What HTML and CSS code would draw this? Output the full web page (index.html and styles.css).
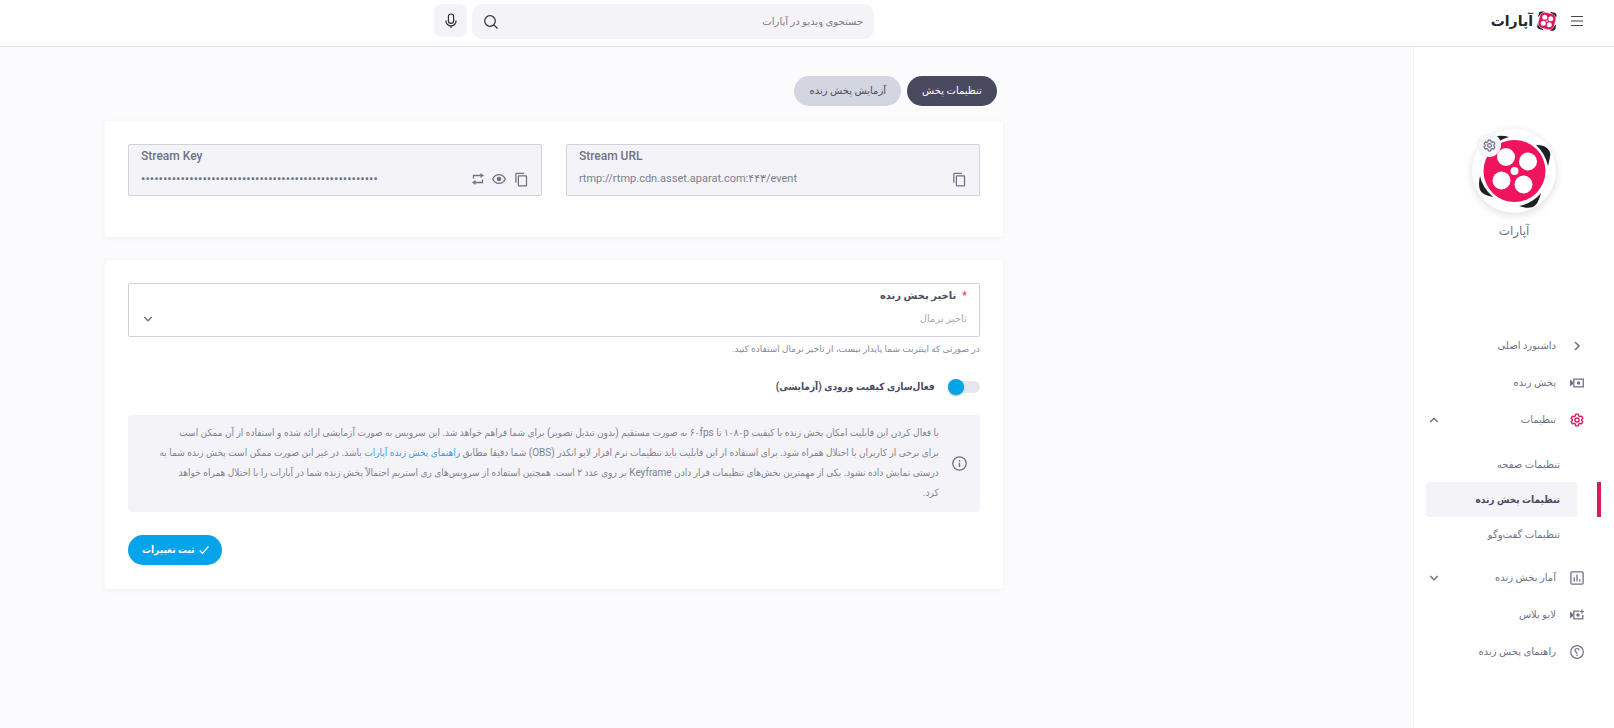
FILE: index.html
```html
<!DOCTYPE html>
<html lang="fa" dir="rtl">
<head>
<meta charset="utf-8">
<meta name="viewport" content="width=device-width, initial-scale=1">
<title>آپارات - تنظیمات پخش زنده</title>
<link rel="stylesheet" href="styles.css">
</head>
<body>
<svg class="sprite" aria-hidden="true">
  <symbol id="i-gear" viewBox="0 0 24 24"><g fill="none" stroke="currentColor" stroke-linejoin="round"><path d="M9.800 2h4.400l.7 3.100 2 1.200 3-1 2.200 3.800-2.300 2.100v1.600l2.300 2.100-2.200 3.800-3-1-2 1.200-.7 3.100H9.800l-.7-3.100-2-1.200-3 1-2.200-3.800 2.300-2.100v-1.600L1.900 9.100l2.200-3.800 3 1 2-1.200z"/><circle cx="12" cy="12" r="3.500"/></g></symbol>
  <symbol id="i-copy" viewBox="0 0 24 24"><path fill="currentColor" d="M16 1H4a2 2 0 0 0-2 2v14h2V3h12zm3 4H8a2 2 0 0 0-2 2v14a2 2 0 0 0 2 2h11a2 2 0 0 0 2-2V7a2 2 0 0 0-2-2zm0 16H8V7h11z"/></symbol>
  <symbol id="i-down" viewBox="0 0 12 12"><path fill="none" stroke="currentColor" stroke-width="1.700" d="M1.500 3.500 6 8l4.500-4.500"/></symbol>
  <symbol id="i-reel" viewBox="0 0 80 80"><g fill="#1f1f24"><path d="M35 6q-6-2-12-1-5 1-7 6l-2 9Q23 9 35 6z"/><path d="M62 14q9 0 12 4 3 3 2 8l-2 9Q71 22 62 14z"/><path d="M6 45q-2 9 0 14 2 5 13 7Q8 56 6 45z"/><path d="M45 75q8 3 14 1 5-2 8-14-8 10-22 13z"/></g><circle cx="40.500" cy="40" r="31" fill="#f0145f"/><g fill="#fff"><circle cx="32" cy="26" r="9"/><circle cx="54" cy="30.500" r="9"/><circle cx="27.500" cy="49.500" r="9"/><circle cx="49.500" cy="53.500" r="9"/><circle cx="40.500" cy="40" r="4"/></g></symbol>
</svg>

<header class="topbar">
  <div class="brand">
    <button class="icon-btn" type="button" aria-label="منو"><svg width="12" height="12" viewBox="0 0 12 12"><path d="M0 1.500h12M0 6h12M0 10.500h12" stroke="#45454d" stroke-width="1.200"/></svg></button>
    <a class="logo" href="#" aria-label="آپارات">
      <svg width="20" height="20" viewBox="0 0 80 80"><g fill="#1f1f24"><path d="M32 2H16Q10 2 8 8L4 24z"/><path d="m52 3 18 4c6 2 9 7 8 13l-5 15z"/><path d="M4 46 1 60c-1 6 3 11 9 12l16 5z"/><path d="m50 78 12 1c7-1 10-4 12-10l3-15z"/></g><rect x="7" y="7" width="66" height="66" rx="22" transform="rotate(14 40 40)" fill="#df1557" stroke="#fff" stroke-width="2"/><g fill="#fff"><circle cx="31" cy="25" r="10"/><circle cx="55" cy="31" r="10"/><circle cx="25" cy="49" r="10"/><circle cx="49" cy="55" r="10"/><circle cx="40" cy="40" r="3.500"/></g></svg>
      <span>آپارات</span>
    </a>
  </div>
  <form class="search" role="search">
    <div class="search-box">
      <input type="search" aria-label="جستجو" placeholder="جستجوی ویدیو در آپارات">
      <button class="icon-btn" type="submit" aria-label="جستجو"><svg width="14" height="14" viewBox="0 0 14 14" fill="none" stroke="#2d2d33" stroke-width="1.200"><circle cx="6" cy="6" r="5.300"/><path d="m9.800 9.800 3.700 3.700"/></svg></button>
    </div>
    <button class="mic" type="button" aria-label="جستجوی صوتی"><svg width="12" height="16" viewBox="0 0 12 16" fill="none" stroke="#2d2d33" stroke-width="1.200"><rect x="3.400" y="1" width="5.200" height="9.400" rx="2.600"/><path d="M1 7.500v.7a5 4.600 0 0 0 10 0v-.7M6 12.800V15"/></svg></button>
  </form>
</header>

<div class="shell">
  <aside class="sidebar">
    <div class="profile">
      <div class="avatar">
        <svg width="80" height="80"><use href="#i-reel"/></svg>
        <button class="avatar-edit" type="button" aria-label="ویرایش"><svg width="13" height="13" stroke-width="2.200"><use href="#i-gear"/></svg></button>
      </div>
      <strong class="profile-name">آپارات</strong>
    </div>
    <nav class="menu">
      <a class="item" href="#"><svg class="ico" viewBox="0 0 14 14"><path d="m5 3 4 4-4 4" fill="none" stroke="currentColor" stroke-width="1.600"/></svg>داشبورد اصلی</a>
      <a class="item" href="#"><svg class="ico" viewBox="0 0 14 14"><path d="M3.800 3.200h9.500v7.600H3.800z" fill="none" stroke="currentColor" stroke-width="1.300"/><path d="M0 3.500 3 6v2L0 10.500z" fill="currentColor"/><circle cx="8.500" cy="7" r="1.700" fill="currentColor"/></svg>پخش زنده</a>
      <button class="item" type="button" aria-expanded="true"><svg class="ico ico-pink" stroke-width="2.400"><use href="#i-gear"/></svg>تنظیمات<svg class="caret caret-up"><use href="#i-down"/></svg></button>
      <div class="submenu">
        <a href="#">تنظیمات صفحه</a>
        <a class="active" href="#" aria-current="page">تنظیمات پخش زنده</a>
        <a href="#">تنظیمات گفت‌وگو</a>
      </div>
      <button class="item" type="button" aria-expanded="false"><svg class="ico" viewBox="0 0 14 14" fill="none" stroke="currentColor" stroke-width="1.300"><rect x=".9" y=".9" width="12.200" height="12.200" rx="1"/><path d="M4.200 10.500V6.200M7 10.500v-7M9.800 10.500V8.200"/></svg>آمار پخش زنده<svg class="caret"><use href="#i-down"/></svg></button>
      <a class="item" href="#"><svg class="ico" viewBox="0 0 14 14"><path d="M9.500 3.200H3.800v7.600h9V7" fill="none" stroke="currentColor" stroke-width="1.300"/><path d="M0 3.500 3 6v2L0 10.500z" fill="currentColor"/><circle cx="8" cy="7" r="1.700" fill="currentColor"/><path d="M12 1.500v4M10 3.500h4" stroke="currentColor" stroke-width="1.200"/></svg>لایو پلاس</a>
      <a class="item" href="#"><svg class="ico" viewBox="0 0 14 14" fill="none" stroke="currentColor"><circle cx="7" cy="7" r="6.300" stroke-width="1.200"/><path d="M9 5.500C9 4.200 8.200 3.500 7 3.500S5 4.300 5 5.400c0 1.500 2 1.600 2 3.300M7 9.600v1.300" stroke-width="1.200"/></svg>راهنمای پخش زنده</a>
    </nav>
  </aside>

  <main class="content">
    <div class="column">
      <nav class="tabs">
        <a class="tab tab-on" href="#">تنظیمات پخش</a>
        <a class="tab" href="#">آزمایش پخش زنده</a>
      </nav>

      <section class="card stream">
        <div class="field locked" dir="ltr">
          <label for="surl">Stream URL</label>
          <div class="row">
            <input id="surl" type="text" readonly value="rtmp://rtmp.cdn.asset.aparat.com:۴۴۳/event">
            <button class="icon-btn" type="button" aria-label="کپی"><svg width="15" height="15"><use href="#i-copy"/></svg></button>
          </div>
        </div>
        <div class="field locked" dir="ltr">
          <label for="skey">Stream Key</label>
          <div class="row">
            <input id="skey" type="password" readonly value="000000000000000000000000000000000000000000000000000000">
            <button class="icon-btn" type="button" aria-label="تغییر کلید"><svg width="12" height="12" viewBox="0 0 12 12"><path d="M1.500 5.500v-3H9M10.500 6.500v3H3" fill="none" stroke="currentColor" stroke-width="1.300"/><path d="M8.500 0 12 2.500 8.500 5zM3.500 7 0 9.500 3.500 12z" fill="currentColor"/></svg></button>
            <button class="icon-btn" type="button" aria-label="نمایش"><svg width="14" height="14" viewBox="0 0 14 14"><path d="M.7 7C2 4.200 4.300 2.700 7 2.700S12 4.200 13.300 7C12 9.800 9.700 11.300 7 11.300S2 9.800.7 7z" fill="none" stroke="currentColor" stroke-width="1.300"/><circle cx="7" cy="7" r="2.300" fill="currentColor"/></svg></button>
            <button class="icon-btn" type="button" aria-label="کپی"><svg width="15" height="15"><use href="#i-copy"/></svg></button>
          </div>
        </div>
      </section>

      <form class="card delay">
        <div class="field">
          <label for="latency"><span class="req">*</span>تاخیر پخش زنده</label>
          <div class="row select">
            <select id="latency"><option>تاخیر نرمال</option></select>
            <svg class="select-caret"><use href="#i-down"/></svg>
          </div>
        </div>
        <p class="hint">در صورتی که اینترنت شما پایدار نیست، از تاخیر نرمال استفاده کنید.</p>
        <label class="toggle"><input type="checkbox" role="switch" checked><span>فعال‌سازی کیفیت ورودی (آزمایشی)</span></label>
        <div class="notice">
          <svg width="15" height="15" viewBox="0 0 15 15" fill="none" stroke="currentColor"><circle cx="7.500" cy="7.500" r="6.700" stroke-width="1.300"/><path d="M7.500 6.700V11M7.500 4v1.400" stroke-width="1.400"/></svg>
          <p>با فعال کردن این قابلیت امکان پخش زنده با کیفیت ۱۰۸۰p تا ۶۰fps به صورت مستقیم (بدون تبدیل تصویر) برای شما فراهم خواهد شد. این سرویس به صورت آزمایشی ارائه شده و استفاده از آن ممکن است<br>برای برخی از کاربران با اختلال همراه شود. برای استفاده از این قابلیت باید تنظیمات نرم افزار لایو انکدر (OBS) شما دقیقا مطابق <a href="#">راهنمای پخش زنده آپارات</a> باشد. در غیر این صورت ممکن است پخش زنده شما به<br>درستی نمایش داده نشود. یکی از مهمترین بخش‌های تنظیمات قرار دادن Keyframe بر روی عدد ۲ است. همچنین استفاده از سرویس‌های ری استریم احتمالاً پخش زنده شما در آپارات را با اختلال همراه خواهد<br>کرد.</p>
        </div>
        <button class="save" type="submit"><svg width="10" height="10" viewBox="0 0 10 10"><path d="m.7 5.500 2.800 2.800 6-6.800" fill="none" stroke="#fff" stroke-width="1.200"/></svg>ثبت تغییرات</button>
      </form>
    </div>
  </main>
</div>
</body>
</html>
```

FILE: styles.css
```css
:root {
  --text: #6f7285;
  --dark: #4a4b5f;
  --soft: #f3f3f8;
  --line: #d0d1d9;
  --pink: #d81b5b;
  --blue: #04a3ea;
  --narrow: Roboto, "DejaVu Sans Condensed", "DejaVu Sans", sans-serif;
}

* { box-sizing: border-box; }

body {
  margin: 0;
  min-height: 100vh;
  display: flex;
  flex-direction: column;
  background: #fbfbfd;
  color: var(--text);
  font: 10px/20px Roboto, "DejaVu Sans", sans-serif;
}

a { color: inherit; text-decoration: none; }
button, input, select { font: inherit; color: inherit; }
button { border: 0; background: none; padding: 0; cursor: pointer; }
svg { flex: none; display: block; }
.sprite { position: absolute; width: 0; height: 0; }
.icon-btn { display: grid; place-items: center; }

.topbar {
  display: grid;
  grid-template-columns: 7fr minmax(0, 440px) 4fr;
  align-items: start;
  height: 47px;
  padding: 4px 31px 4px 29px;
  background: #fff;
  border-bottom: 1px solid #e4e4ec;
}
.brand { display: flex; align-items: center; gap: 14px; height: 34px; }
.logo {
  display: flex;
  align-items: center;
  gap: 4px;
  color: #25252b;
  font-size: 14px;
  font-weight: 700;
}
.search { display: flex; gap: 5px; }
.search-box {
  flex: 1;
  display: flex;
  align-items: center;
  height: 35px;
  padding: 0 11px 0 12px;
  border-radius: 10px;
  background: var(--soft);
}
.search-box input {
  flex: 1;
  min-width: 0;
  border: 0;
  padding: 0;
  outline: 0;
  background: none;
}
.search-box input::placeholder { color: #7b7c88; }
.mic {
  display: grid;
  place-items: center;
  width: 33px;
  height: 33px;
  border-radius: 8px;
  background: var(--soft);
}

.shell { flex: 1; display: flex; }

.sidebar {
  width: 201px;
  padding-top: 82px;
  background: #fff;
  border-left: 1px solid #f3f3f7;
}
.profile { display: flex; flex-direction: column; align-items: center; gap: 8px; }
.avatar {
  position: relative;
  display: grid;
  place-items: center;
  width: 84px;
  height: 84px;
  border-radius: 50%;
  background: #fff;
  box-shadow: 0 2px 8px rgba(0, 0, 0, .14);
}
.avatar-edit {
  position: absolute;
  top: 4px;
  left: 5px;
  display: grid;
  place-items: center;
  width: 24px;
  height: 24px;
  border-radius: 50%;
  background: var(--soft);
}
.profile-name { font-size: 12px; font-weight: 400; }

.menu { padding-top: 86px; }
.item {
  display: flex;
  align-items: center;
  gap: 14px;
  width: 100%;
  height: 37px;
  padding: 0 30px 0 15px;
  text-align: start;
}
.ico { width: 14px; height: 14px; }
.ico-pink { color: var(--pink); }
.caret { width: 10px; height: 10px; margin-inline-start: auto; }
.caret-up { transform: rotate(180deg); }
.submenu { padding: 9px 0 7px; }
.submenu a {
  display: block;
  margin: 0 37px 0 12px;
  padding: 0 17px;
  line-height: 35px;
}
.submenu .active {
  position: relative;
  border-radius: 4px;
  background: var(--soft);
  color: var(--dark);
  font-family: var(--narrow);
  font-weight: 700;
}
.submenu .active::before {
  content: "";
  position: absolute;
  top: 0;
  right: -24px;
  width: 4px;
  height: 100%;
  background: var(--pink);
}

.content {
  flex: 1;
  min-width: 0;
  display: grid;
  grid-template-columns: 1fr 3fr;
  gap: 6px;
  padding: 29px 105px;
}
.column { grid-column: 2; min-width: 0; }
.tabs { display: flex; gap: 6px; padding: 0 6px; margin-bottom: 15px; }
.tab {
  padding: 0 15px;
  border-radius: 15px;
  line-height: 30px;
  background: #d3d5e0;
  color: var(--dark);
}
.tab-on { background: #49495f; color: #fff; }

.card {
  padding: 23px 23px 24px;
  border-radius: 3px;
  background: #fff;
  box-shadow: 0 1px 5px rgba(40, 40, 80, .05);
}
.stream {
  display: grid;
  grid-template-columns: 1fr 1fr;
  gap: 24px;
  padding-bottom: 41px;
  margin-bottom: 23px;
}
.field {
  border: 1px solid var(--line);
  border-radius: 2px;
  padding: 2px 12px 4px;
}
.locked { height: 52px; padding-top: 1px; background: var(--soft); }
.field label { display: block; color: var(--dark); font-weight: 700; }
.locked label { font-size: 12px; font-weight: 500; color: var(--text); }
.row { display: flex; align-items: center; gap: 8px; height: 26px; }
.row input {
  flex: 1;
  min-width: 0;
  border: 0;
  padding: 0;
  outline: 0;
  background: none;
  color: #7c7e8c;
  font-size: 11px;
}
.row input[type="password"] { font-size: 13px; color: var(--text); }
.req { color: #f0434c; margin-inline-end: 6px; }
.select { position: relative; }
.select select {
  width: 100%;
  border: 0;
  padding: 0;
  outline: 0;
  appearance: none;
  background: none;
  color: #a9aab4;
}
.select-caret {
  position: absolute;
  left: 2px;
  width: 10px;
  height: 10px;
  pointer-events: none;
}

.hint { margin: 2px 0 18px; font-size: 9px; color: #8a8b98; }
.toggle {
  display: flex;
  align-items: center;
  gap: 13px;
  width: fit-content;
  margin-bottom: 18px;
  color: var(--dark);
  font-family: var(--narrow);
  font-weight: 700;
}
.toggle input {
  position: relative;
  appearance: none;
  width: 32px;
  height: 12px;
  margin: 0;
  border-radius: 6px;
  background: #e6e6ef;
}
.toggle input::before {
  content: "";
  position: absolute;
  top: -2px;
  right: 0;
  width: 16px;
  height: 16px;
  border-radius: 50%;
  background: #fff;
  box-shadow: 0 1px 2px rgba(0, 0, 0, .3);
}
.toggle input:checked::before { right: auto; left: 0; background: var(--blue); }

.notice {
  display: flex;
  align-items: center;
  gap: 13px;
  padding: 8px 13px 9px 9px;
  border-radius: 4px;
  background: var(--soft);
}
.notice p { margin: 0; color: #82838f; font-family: var(--narrow); }
.notice a { color: #38a0e0; }

.save {
  display: flex;
  align-items: center;
  gap: 4px;
  height: 30px;
  margin: 23px auto 0 0;
  padding: 0 13px 0 14px;
  border-radius: 15px;
  background: var(--blue);
  color: #fff;
  font-family: var(--narrow);
  font-weight: 700;
}
```
